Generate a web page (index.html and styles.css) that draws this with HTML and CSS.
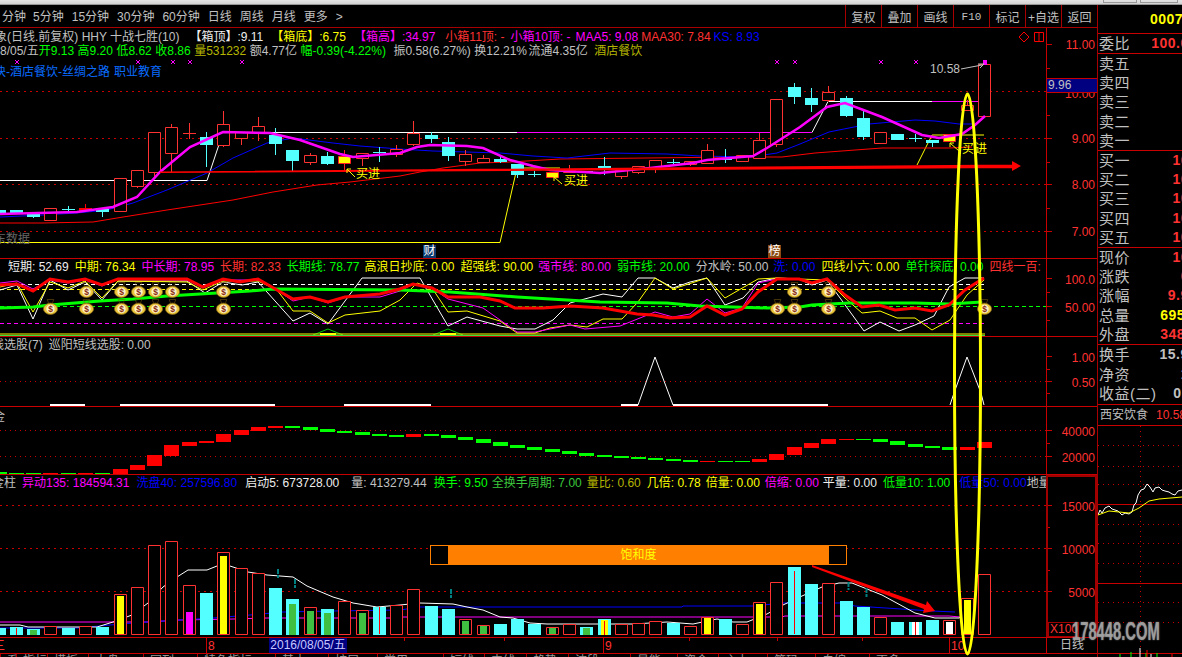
FILE: index.html
```html
<!DOCTYPE html>
<html lang="zh">
<head>
<meta charset="utf-8">
<title>K线</title>
<link rel="stylesheet" href="styles.css">
</head>
<body>
<div class="titlebar"><i class="win-btn"></i><i class="win-btn wide"></i></div>
<div class="app">
  <main class="main">
    <nav class="toolbar">
      <div class="periods">
        <span class="cutoff">分钟</span><span>5分钟</span><span>15分钟</span><span>30分钟</span><span>60分钟</span><span>日线</span><span>周线</span><span>月线</span><span>更多</span><span>&gt;</span>
      </div>
      <div class="tools">
        <span>复权</span><span>叠加</span><span>画线</span><span class="f10">F10</span><span>标记</span><span>+自选</span><span>返回</span>
      </div>
    </nav>

    <section class="pane pane-k">
      <div class="plot">
        <svg class="chart" viewBox="0 28 1046 230">
          <path class="dot" d="M0 91.5H1046M0 138.5H1046M0 184.5H1046M0 231.5H1046"/>
          <path class="thin-yellow" d="M0 242.5H500L517 168H560M917 165L932 135H984"/>
          <path class="thin-white" d="M0 180.5H207L223 132.5H517M812 132.5L828 101.5H932"/>
          <path class="thin-magenta" d="M517 132.5H812M932 101.5H984"/>
          <path class="thin-red" d="M0 223H42L93 222L117 218L167 210L233 200L273 192L317 185L350 182L400 176L420 172L443 168L480 163L510 162L560 159L733 157L782 157L815 153L882 148L949 148L972 147"/>
          <path class="thin-blue" d="M0 217L43 215L77 213L107 210L133 203L167 190L207 173L233 158L267 143L293 138L333 143L360 146L400 149L433 151L500 153L533 156L567 158L610 153L667 154L700 156L750 157L777 153L800 144L829 132L869 124L915 120L935 121L959 124L972 124"/>
          <path class="cand-red" d="M44.5 208.5h12v12h-12zM114.5 178.5h12v33h-12zM131.5 170.5h12v16h-12zM137.5 186V188M148.5 132.5h12v40h-12zM154.5 172V179M165.5 127.5h12v26h-12zM171.5 124V127M171.5 153V173M183 133.5h13M189.5 123V139M217.5 124.5h12v21h-12zM223.5 111V124M223.5 145V147M235.5 132.5h12v6h-12zM241.5 138V145M252.5 126.5h12v6h-12zM258.5 117V126M258.5 132V141M304.5 155.5h12v7h-12zM310.5 153V155M310.5 162V165M356.5 153.5h12v5h-12zM362.5 158V166M390.5 149.5h12v5h-12zM396.5 145V149M396.5 154V157M407.5 133.5h12v11h-12zM413.5 121V133M413.5 144V146M459.5 154.5h12v7h-12zM465.5 150V154M465.5 161V166M477.5 158.5h12v4h-12zM483.5 155V158M483.5 162V163M563.5 170.5h12v2h-12zM569.5 165V170M615.5 170.5h12v6h-12zM621.5 176V179M632.5 166.5h12v6h-12zM638.5 172V174M649.5 160.5h12v8h-12zM655.5 168V173M684.5 161.5h12v3h-12zM690.5 164V166M701.5 150.5h12v13h-12zM707.5 144V150M736.5 155.5h12v6h-12zM753.5 140.5h12v18h-12zM759.5 133V140M770.5 99.5h12v45h-12zM776.5 144V147M822.5 92.5h12v8h-12zM828.5 86V92M828.5 100V102M874.5 132.5h12v11h-12zM961.5 105.5h12v5h-12zM967.5 100V105M978.5 64.5h12v52h-12z"/>
          <path class="fill-red" d="M79 208h13v3h-13zM85 204h1v8h-1z"/>
          <path class="cand-yellow" d="M338.5 156.5h12v7h-12zM344.5 150V156M344.5 163V170M546.5 172.5h12v5h-12zM943.5 134.5h12v7h-12z"/>
          <path class="fill-cyan" d="M0 210h6v3h-6zM10 210h13v3.5h-13zM27 214h13v3h-13zM96 209h13v3h-13zM200 137h13v8h-13zM269 135h13v9h-13zM286 150h13v11h-13zM321 156h13v8h-13zM425 135h13v4h-13zM442 142h13v14h-13zM494 159h13v3h-13zM511 164h13v11h-13zM580 171h13v2h-13zM598 166h13v4h-13zM788 87h13v10h-13zM805 98h13v7h-13zM840 98h13v18h-13zM857 118h13v19h-13zM891 134h13v6h-13zM926 140h13v3h-13z"/>
          <path class="wick-cyan" d="M33.5 212V218M62 209.5H75M68.5 206V212M102.5 212V217M206.5 132V167M275.5 128V155M292.5 161V172M327.5 152V165M373 152.5H386M379.5 147V162M431.5 132V143M448.5 137V161M500.5 156V163M517.5 175V178M528 174.5H541M534.5 171V177M604.5 157V175M667 162.5H680M673.5 159V165M719 159.5H732M725.5 149V163M794.5 83V104M811.5 88V112M846.5 96V117M863.5 111V140M909 138.5H922M915.5 134V142M932.5 143V147"/>
          <path class="thick-magenta" d="M0 214L77 212L113 207L137 197L160 172L190 147L223 132L270 133L300 140L340 154L353 157L400 153L417 147L430 145L467 146L483 148L510 160L533 166L550 170L600 173L650 168L693 163L707 160L753 156L767 148L800 127L827 107L845 103L882 117L922 135L939 138L962 134L975 125L985 116"/>
          <path class="arrow-red" d="M160 171.5L1012 164.5V168L160 173zM1012 161L1021 166L1012 171z"/>
          <path class="marks" d="M15 60l4 4m0-4l-4 4M136 60l4 4m0-4l-4 4M171 60l4 4m0-4l-4 4M188 60l4 4m0-4l-4 4M240 60l4 4m0-4l-4 4M775 60l4 4m0-4l-4 4M793 60l4 4m0-4l-4 4M879 60l4 4m0-4l-4 4M914 60l4 4m0-4l-4 4"/>
          <rect class="mark-fill" x="983" y="60" width="4" height="5"/>
          <path class="label-line" d="M961 69L982 65M978 64L984 64L980 68"/>
          <path class="buy-arrow" d="M347 169l8 8M347 169h4M347 169v4M554 177l8 7M554 177h4M554 177v4M950 143l9 8M950 143h4M950 143v4"/>
          <text class="buy" x="356" y="178">买进</text>
          <text class="buy" x="564" y="185">买进</text>
          <text class="buy wide" x="962" y="153">买进</text>
          <text class="price-note" x="930" y="73">10.58</text>
          <path class="sig-red" d="M1024 32l5 5-5 5-5-5zM1034.5 32.500h9v9h-9zM1039 32.500v9"/>
        </svg>
        <div class="heads">
          <div class="head-row">
            <span class="g shift">象(日线.前复权) HHY 十战七胜(10)</span>
            <span class="w s1">【箱顶】:9.11</span>
            <span class="y s2">【箱底】:6.75</span>
            <span class="m s2">【箱高】:34.97</span>
            <span class="r s3b">小箱11顶: -</span>
            <span class="m s4">小箱10顶: -</span>
            <span class="m s5">MAA5: 9.08</span>
            <span class="r s3">MAA30: 7.84</span>
            <span class="b s3">KS: 8.93</span>
          </div>
          <div class="head-row tight">
            <span class="g">8/05/五</span>
            <span class="gr">开9.13</span>
            <span class="gr s7">高9.20</span>
            <span class="gr s7">低8.62</span>
            <span class="gr s7">收8.86</span>
            <span class="ol s7">量531232</span>
            <span class="g s7">额4.77亿</span>
            <span class="gr s7">幅-0.39(-4.22%)</span>
            <span class="g s10">振0.58(6.27%)</span>
            <span class="g s7">换12.21%</span>
            <span class="g s11">流通4.35亿</span>
            <span class="ol s12">酒店餐饮</span>
          </div>
          <div class="head-row concept">
            <span class="sky shift-c">块-酒店餐饮-丝绸之路</span>
            <span class="sky s6">职业教育</span>
          </div>
        </div>
        <span class="ghost">东数据</span>
        <span class="chip chip-blue">财</span>
        <span class="chip chip-brown">榜</span>
      </div>
      <div class="axis">
        <svg class="chart" viewBox="1047 28 50 230">
          <path class="tick" d="M1047 44.500h5M1047 68.500h3M1047 115.500h3M1047 138.500h5M1047 162.500h3M1047 184.500h5M1047 208.500h3M1047 231.500h5"/>
          <text class="axis-text" x="1095" y="48">11.00</text>
          <text class="axis-text" x="1095" y="97">10.00</text>
          <text class="axis-text" x="1095" y="142">9.00</text>
          <text class="axis-text" x="1095" y="188">8.00</text>
          <text class="axis-text" x="1095" y="235">7.00</text>
        </svg>
        <div class="cursor-price">9.96</div>
      </div>
    </section>

    <section class="pane pane-osc">
      <div class="plot">
        <svg class="chart" viewBox="0 259 1046 77">
          <defs>
            <symbol id="bag" viewBox="0 0 16 16">
              <path class="bag-neck" d="M4.500 0h7l-1.500 4h-4z"/>
              <ellipse class="bag-body" cx="8" cy="10" rx="7.500" ry="6"/>
              <ellipse class="bag-core" cx="8" cy="10" rx="4.500" ry="4.500"/>
              <text class="bag-sign" x="8" y="13.500">$</text>
            </symbol>
          </defs>
          <path class="dash-w" d="M0 284.500H985"/>
          <path class="dash-y" d="M0 289.500H985"/>
          <path class="dash-g" d="M0 306.500H1046"/>
          <path class="dash-m" d="M0 323.500H985"/>
          <path class="base-g" d="M313 335L328 329L343 335M433 335L448 329L463 335"/>
          <path class="base-y" d="M320 334H336M440 334H456"/>
          <path class="line-base-y" d="M0 334H985"/>
          <path class="line-base-g" d="M0 335.500H985"/>
          <path class="thin-white" d="M0 290L17 285L33 319L50 280L68 290L85 282L102 300L118 281L187 281L205 293L223 282L242 285L258 282L293 321L310 313L328 324L362 278L420 278L448 326L467 317L500 326L517 329L535 329L553 320L570 303L603 294L622 297L638 278L655 278L673 288L690 282L707 278L725 305L743 298L758 282L777 278L799 279L812 285L827 280L864 331L880 322L899 331L915 325L934 316L949 287L965 278L984 278"/>
          <path class="thin-yellow" d="M0 287L17 283L33 312L50 282L68 288L85 281L102 298L118 281L187 282L203 290L223 281L258 281L277 290L293 311L310 311L328 323L345 315L380 311L400 300L417 283L432 288L448 312L467 311L500 321L517 333L535 333L550 328L570 325L587 327L603 319L622 319L638 302L655 278L673 289L707 278L725 298L758 279L777 278L799 279L827 280L845 298L862 313L880 311L897 318L915 318L932 330L950 320L967 295L984 280"/>
          <path class="thin-magenta" d="M0 283L17 281L33 289L50 280L68 283L85 280L102 286L118 279L187 280L203 288L223 280L258 280L277 290L293 301L310 297L328 303L345 297L380 297L400 291L413 284L432 288L448 299L483 308L517 332L535 332L570 325L585 329L620 326L655 312L673 317L690 314L707 299L725 313L742 308L758 283L777 279"/>
          <path class="thick-green" d="M0 308L33 307L50 305L100 301L133 299L167 296L217 293L250 291L273 289L400 290L450 292L517 297L567 300L600 302L667 303L700 306L733 307L767 308L800 307L812 305L849 303L915 303L949 304L982 302"/>
          <path class="thick-red" d="M0 285L17 284L33 291L50 279L68 282L85 279L102 285L118 279L187 279L203 287L223 279L240 282L258 279L277 290L293 299L310 297L328 302L345 297L380 294L400 289L413 284L432 288L448 297L480 297L500 301L515 308L543 308L570 306L603 308L637 314L653 315L670 318L690 317L707 306L725 315L742 309L758 292L777 279L799 279L812 283L827 279L845 295L862 307L879 305L895 310L915 308L932 311L949 305L965 290L984 278"/>
          <use href="#bag" x="43" y="299" width="15" height="16"/>
          <use href="#bag" x="79" y="282" width="15" height="16"/>
          <use href="#bag" x="79" y="299" width="15" height="16"/>
          <use href="#bag" x="114" y="282" width="15" height="16"/>
          <use href="#bag" x="114" y="299" width="15" height="16"/>
          <use href="#bag" x="131" y="282" width="15" height="16"/>
          <use href="#bag" x="131" y="299" width="15" height="16"/>
          <use href="#bag" x="148" y="282" width="15" height="16"/>
          <use href="#bag" x="148" y="299" width="15" height="16"/>
          <use href="#bag" x="165" y="282" width="15" height="16"/>
          <use href="#bag" x="165" y="299" width="15" height="16"/>
          <use href="#bag" x="216" y="282" width="15" height="16"/>
          <use href="#bag" x="216" y="299" width="15" height="16"/>
          <use href="#bag" x="770" y="299" width="15" height="16"/>
          <use href="#bag" x="787" y="282" width="15" height="16"/>
          <use href="#bag" x="787" y="299" width="15" height="16"/>
          <use href="#bag" x="821" y="282" width="15" height="16"/>
          <use href="#bag" x="821" y="299" width="15" height="16"/>
          <use href="#bag" x="977" y="299" width="15" height="16"/>
        </svg>
        <div class="heads">
          <div class="head-row">
            <span class="w s8">短期: 52.69</span>
            <span class="y s9">中期: 76.34</span>
            <span class="m s9">中长期: 78.95</span>
            <span class="r s9">长期: 82.33</span>
            <span class="gr s9">长期线: 78.77</span>
            <span class="y s9b">高浪日抄底: 0.00</span>
            <span class="y s9">超强线: 90.00</span>
            <span class="m s9b">强市线: 80.00</span>
            <span class="gr s9">弱市线: 20.00</span>
            <span class="g s9">分水岭: 50.00</span>
            <span class="b s9b">洗: 0.00</span>
            <span class="y s9">四线小六: 0.00</span>
            <span class="gr s9">单针探底: 0.00</span>
            <span class="r s9">四线一百:</span>
          </div>
        </div>
      </div>
      <div class="axis">
        <svg class="chart" viewBox="1047 259 50 77">
          <path class="tick" d="M1047 278.500h5M1047 292.500h3M1047 306.500h5M1047 320.500h3"/>
          <text class="axis-text" x="1095" y="283">100.0</text>
          <text class="axis-text" x="1095" y="311">50.00</text>
        </svg>
      </div>
    </section>

    <section class="pane pane-select">
      <div class="plot">
        <svg class="chart" viewBox="0 337 1046 69">
          <path class="dot-fine" d="M0 381.500H1046"/>
          <path class="base-white" d="M50 405H85M120 405H275M344 405H431M621 405H638M673 405H828"/>
          <path class="line-white" d="M638 405L655 357L673 405M950 405L954 393L967 357L981 393L984 405"/>
        </svg>
        <div class="heads">
          <div class="head-row">
            <span class="g shift-l">线选股(7)</span>
            <span class="g s9">巡阳短线选股: 0.00</span>
          </div>
        </div>
      </div>
      <div class="axis">
        <svg class="chart" viewBox="1047 337 50 69">
          <path class="tick" d="M1047 356.500h5M1047 369.500h3M1047 381.500h5M1047 393.500h3"/>
          <text class="axis-text" x="1095" y="361">1.00</text>
          <text class="axis-text" x="1095" y="386">0.50</text>
        </svg>
      </div>
    </section>

    <section class="pane pane-fund">
      <div class="plot">
        <svg class="chart" viewBox="0 407 1046 67">
          <path class="dot-fine" d="M0 430.500H1046M0 456.500H1046"/>
          <path class="fill-green" d="M0 472h7v2h-7zM9 473h15v1h-15zM26 473h15v1h-15zM61 473h15v1h-15zM95 473h15v1h-15zM285 426h15v2h-15zM303 427h15v3h-15zM320 429h15v3h-15zM337 431h15v2h-15zM355 432h15v3h-15zM372 434h15v2h-15zM389 435h15v2h-15zM424 434h15v2h-15zM441 435h15v3h-15zM458 437h15v3h-15zM476 439h15v4h-15zM493 442h15v4h-15zM510 445h15v3h-15zM527 447h15v3h-15zM545 449h15v3h-15zM562 451h15v3h-15zM579 453h15v3h-15zM597 455h15v2h-15zM614 456h15v2h-15zM631 457h15v2h-15zM648 458h15v2h-15zM666 459h15v2h-15zM683 460h15v2h-15zM718 461h15v1h-15zM735 461h15v1h-15zM856 439h15v1h-15zM873 439h15v3h-15zM890 441h15v4h-15zM908 444h15v3h-15zM925 446h15v2h-15zM942 447h15v3h-15z"/>
          <path class="fill-pure-red" d="M43 473h15v1h-15zM78 473h15v1h-15zM113 469h15v5h-15zM130 465h15v5h-15zM147 455h15v11h-15zM164 445h15v11h-15zM182 442h15v4h-15zM199 441h15v2h-15zM216 434h15v8h-15zM234 430h15v5h-15zM251 427h15v4h-15zM268 426h15v2h-15zM406 434h15v3h-15zM700 461h15v1h-15zM752 459h15v3h-15zM769 454h15v6h-15zM787 447h15v8h-15zM804 443h15v5h-15zM821 439h15v5h-15zM839 439h15v1h-15zM960 447h15v3h-15zM977 442h15v6h-15z"/>
        </svg>
        <div class="heads">
          <div class="head-row">
            <span class="g shift-xs">金</span>
          </div>
        </div>
      </div>
      <div class="axis">
        <svg class="chart" viewBox="1047 407 50 67">
          <path class="tick" d="M1047 430.500h5M1047 443.500h3M1047 456.500h5"/>
          <text class="axis-text" x="1095" y="435">40000</text>
          <text class="axis-text" x="1095" y="461">20000</text>
        </svg>
      </div>
    </section>

    <section class="pane pane-vol">
      <div class="plot">
        <svg class="chart" viewBox="0 475 1046 162">
          <path class="dot" d="M0 505.500H1046M0 548.500H1046M0 591.500H1046"/>
          <path class="thin-magenta" d="M0 622H107L147 622L180 620L233 619L267 618H400L402 617H782L785 616H949L960 617"/>
          <path class="thin-blue" d="M0 628L77 628L110 625L147 622L180 620L213 618L250 615L283 612L333 611L400 610L420 607H682L683 606H753L783 603H842L855 606L932 611L955 612"/>
          <path class="thin-white" d="M0 625H20L28 627H97L113 622L132 615L148 603L163 587L177 577L188 570H207L217 566H230L248 572L267 575L293 577L307 586L333 597L353 603L377 607L400 605L420 603L453 604L467 607L483 610L500 617L513 618L530 623L547 624H633L667 622L693 624L717 619L733 622H747L767 614L783 605L802 596L822 587L839 583H852L882 595L915 613L935 618L959 618L975 610"/>
          <path class="fill-cyan" d="M0 628h6v7h-6zM10 627h13v8h-13zM27 629h13v6h-13zM62 628h13v7h-13zM96 627h13v8h-13zM200 593h13v42h-13zM269 588h13v47h-13zM286 599h13v36h-13zM321 609h13v26h-13zM373 607h13v28h-13zM425 606h13v29h-13zM442 609h13v26h-13zM494 624h13v11h-13zM511 619h13v16h-13zM528 624h13v11h-13zM580 627h13v8h-13zM598 619h13v16h-13zM667 623h13v12h-13zM719 619h13v16h-13zM788 567h13v68h-13zM805 584h13v51h-13zM840 601h13v34h-13zM857 607h13v28h-13zM891 622h13v13h-13zM909 622h13v13h-13zM926 620h13v15h-13z"/>
          <path class="bar-red" d="M44.500 626.500h12v8h-12zM79.500 626.500h12v8h-12zM114.500 594.500h12v40h-12zM131.500 587.500h12v47h-12zM148.500 545.500h12v89h-12zM165.500 541.500h12v93h-12zM183.500 585.500h12v49h-12zM217.500 552.500h12v82h-12zM235.500 568.500h12v66h-12zM252.500 573.500h12v61h-12zM304.500 607.500h12v27h-12zM338.500 601.500h12v33h-12zM356.500 610.500h12v24h-12zM390.500 605.500h12v29h-12zM407.500 589.500h12v45h-12zM459.500 619.500h12v15h-12zM477.500 625.500h12v9h-12zM546.500 627.500h12v7h-12zM563.500 624.500h12v10h-12zM615.500 624.500h12v10h-12zM632.500 623.500h12v11h-12zM649.500 621.500h12v13h-12zM684.500 626.500h12v8h-12zM701.500 617.500h12v17h-12zM736.500 624.500h12v10h-12zM753.500 602.500h12v32h-12zM770.500 582.500h12v52h-12zM822.500 583.500h12v51h-12zM874.500 617.500h12v17h-12zM943.500 620.500h12v14h-12zM961.500 598.500h12v36h-12zM978.500 574.500h12v60h-12z"/>
          <path class="fill-green-soft" d="M30 630h7v5h-7zM289 604h7v31h-7zM307 611h7v23h-7zM324 613h7v22h-7zM359 613h7v21h-7zM462 621h7v13h-7zM480 626h7v8h-7zM549 628h7v6h-7zM583 628h7v7h-7z"/>
          <path class="fill-yellow" d="M117 596h7v38h-7zM220 556h7v78h-7zM601 620h7v15h-7zM704 618h7v16h-7zM756 604h7v30h-7zM964 600h7v34h-7z"/>
          <rect class="fill-magenta" x="186" y="612" width="7" height="22"/>
          <path class="fill-white" d="M912 622h7v13h-7zM946 622h7v12h-7z"/>
          <path class="stroke-red" d="M16.500 628V635M379.500 607V634M604.500 621V635M794.500 571V634M915.500 622V635"/>
          <path class="stroke-teal" d="M278 569v9M295 579v9M451 589v9M848.500 582v8M866.500 588v9"/>
          <path class="arrow-red" d="M812 565L926 605L927 601L935 611L923 613L924 609L812 567z"/>
        </svg>
        <div class="heads">
          <div class="head-row gap6">
            <span class="g shift-v">金柱</span>
            <span class="m">异动135: 184594.31</span>
            <span class="b e1">洗盘40: 257596.80</span>
            <span class="w e2">启动5: 673728.00</span>
            <span class="g e6">量: 413279.44</span>
            <span class="gr e1">换手: 9.50</span>
            <span class="dg n2">全换手周期: 7.00</span>
            <span class="ol n1">量比: 0.60</span>
            <span class="y">几倍: 0.78</span>
            <span class="y n1">倍量: 0.00</span>
            <span class="m n1">倍缩: 0.00</span>
            <span class="w n2">平量: 0.00</span>
            <span class="gr">低量10: 1.00</span>
            <span class="b e3">低量50: 0.00</span>
            <span class="g n6">地量</span>
          </div>
        </div>
        <div class="saturation">
          <span class="sat-gap"></span>
          <span class="sat-fill">饱和度</span>
          <span class="sat-gap sat-gap-end"></span>
        </div>
      </div>
      <div class="axis axis-active">
        <svg class="chart" viewBox="1048 477 47 160">
          <path class="tick" d="M1048 505.500h4M1048 527.500h2M1048 548.500h4M1048 570.500h2M1048 591.500h4"/>
          <text class="axis-text" x="1095" y="510">15000</text>
          <text class="axis-text" x="1095" y="553">10000</text>
          <text class="axis-text" x="1095" y="596">5000</text>
        </svg>
        <div class="scale-box">X100</div>
      </div>
    </section>

    <section class="pane pane-dates">
      <div class="plot">
        <svg class="chart" viewBox="0 638 1046 15">
          <path class="tick" d="M206.500 638V653M603.500 638V653M949.500 638V653M404.500 638V641M504.500 638V641M689.500 638V641M777.500 638V641M862.500 638V641"/>
          <text class="date-num" x="208" y="650">8</text>
          <text class="date-num" x="605" y="650">9</text>
          <text class="date-num" x="951" y="650">10</text>
          <text class="date-num" x="-7" y="650">三</text>
        </svg>
        <span class="cursor-date">2016/08/05/五</span>
      </div>
      <div class="axis axis-label">日线</div>
    </section>

    <div class="tabs">
      <span>系统</span><span>指标</span><span>模板</span><span>大盘</span><span>同列</span><span>特色指标</span><span>基本</span><span>扩展</span><span>常用</span><span>短线</span><span>中线</span><span>趋势</span><span>波段</span><span>量能</span><span>资金</span><span>主力</span><span>筹码</span><span>自编</span><span>更多</span>
    </div>
  </main>

  <aside class="side">
    <div class="code"><span>0007</span></div>
    <div class="side-group ratio">
      <div class="quote"><span>委比</span><b class="r">100.00%</b></div>
    </div>
    <div class="side-group book">
      <div class="quote"><span>卖五</span></div>
      <div class="quote"><span>卖四</span></div>
      <div class="quote"><span>卖三</span></div>
      <div class="quote"><span>卖二</span></div>
      <div class="quote"><span>卖一</span></div>
    </div>
    <div class="side-group book">
      <div class="quote"><span>买一</span><b class="r">10.58</b></div>
      <div class="quote"><span>买二</span><b class="r">10.57</b></div>
      <div class="quote"><span>买三</span><b class="r">10.56</b></div>
      <div class="quote"><span>买四</span><b class="r">10.55</b></div>
      <div class="quote"><span>买五</span><b class="r">10.54</b></div>
    </div>
    <div class="side-group book">
      <div class="quote"><span>现价</span><b class="r">10.58</b></div>
      <div class="quote"><span>涨跌</span><b class="r">0.96</b></div>
      <div class="quote"><span>涨幅</span><b class="r">9.98%</b></div>
      <div class="quote"><span>总量</span><b class="y">695382</b></div>
      <div class="quote"><span>外盘</span><b class="r">348120</b></div>
    </div>
    <div class="side-group stats">
      <div class="quote"><span>换手</span><b class="g">15.99%</b></div>
      <div class="quote"><span>净资</span><b class="g">1.12</b></div>
      <div class="quote"><span>收益(二)</span><b class="g">0.119</b></div>
    </div>
    <div class="side-group peer">
      <span class="peer-name">西安饮食</span><span class="peer-price">10.58</span>
    </div>
    <svg class="mini" viewBox="1098 426 84 231">
      <path class="dot-fine" d="M1098 445.500H1182M1098 466.500H1182M1098 484.500H1182M1098 524.500H1182M1098 543.500H1182M1098 563.500H1182M1098 602.500H1182M1098 622.500H1182M1140.500 426V653"/>
      <path class="tick" d="M1098 504.500H1182M1098 583.500H1182M1098 653.500H1182"/>
      <path class="mini-white" d="M1098 515L1100 510L1102 513L1105 508L1109 506L1112 509L1115 510L1118 511L1122 515L1125 513L1129 514L1132 512L1134 505L1136 503L1138 495L1141 490L1144 489L1147 484L1150 487L1153 492L1155 488L1159 487L1162 490L1165 491L1169 492L1172 494L1175 495L1178 491L1182 490"/>
      <path class="mini-yellow" d="M1098 515L1109 511L1129 513L1139 508L1149 501L1159 499L1182 497"/>
      <path class="mini-vol" d="M1120 654v3M1131 652v5M1146 653v4M1157 653v4"/>
      <path class="mini-vol-w" d="M1140 648v9M1151 654v3"/>
      <path class="mini-vol-r" d="M1147 650v7M1172 654v3"/>
    </svg>
  </aside>
</div>

<svg class="overlay" viewBox="0 0 1182 657">
  <ellipse class="ring" cx="967.500" cy="374" rx="13" ry="280"/>
</svg>
<div class="watermark">178448.COM</div>
</body>
</html>
```

FILE: styles.css
```css
* { box-sizing: border-box; }
html, body { margin: 0; padding: 0; }
body {
  position: relative;
  width: 1182px;
  height: 657px;
  overflow: hidden;
  background: #000;
  color: #c0c0c0;
  font-family: "Liberation Sans", "Noto Sans CJK SC", sans-serif;
  font-size: 12px;
}
.titlebar { height: 5px; display: flex; justify-content: flex-end; gap: 3px; padding-right: 4px; background: linear-gradient(#e4e4e4 0, #d4d4d4 70%, #777 100%); }
.win-btn { width: 34px; height: 3px; border: 1px solid #999; border-top: 0; }
.win-btn.wide { width: 38px; }
.app { display: flex; height: 652px; }
.main { width: 1097px; display: flex; flex-direction: column; flex: none; }

/* toolbar */
.toolbar { height: 23px; flex: none; display: flex; justify-content: space-between; border-bottom: 1px solid #a80000; }
.periods { display: flex; align-items: center; gap: 8px; padding-left: 2px; padding-top: 1px; font-size: 12px; line-height: 14px; }
.cutoff { margin-right: -1px; }
.tools { display: flex; }
.tools span { width: 36px; display: flex; align-items: center; justify-content: center; padding-top: 1px; border-left: 1px solid #a80000; }
.f10 { font-family: "Liberation Mono", monospace; font-size: 11px; }

/* panes */
.pane { display: flex; flex: none; border-bottom: 1px solid #c80000; }
.pane-k { height: 231px; }
.pane-osc { height: 78px; }
.pane-select { height: 70px; }
.pane-fund { height: 68px; }
.pane-vol { height: 163px; }
.pane-dates { height: 16px; }
.plot { position: relative; width: 1046px; flex: none; overflow: hidden; }
.axis { position: relative; flex: 1; border-left: 1px solid #c80000; overflow: hidden; }
.chart { position: absolute; left: 0; top: 0; width: 100%; height: 100%; display: block; }
.heads { position: relative; white-space: nowrap; }
.head-row { display: flex; height: 14px; line-height: 14px; font-size: 12px; padding-top: 0; }
.pane-k .heads { padding-top: 2px; }
.pane-osc .heads { padding-top: 1px; }
.pane-select .heads { padding-top: 1px; }
.pane-fund .heads { padding-top: 3px; }
.pane-vol .heads { padding-top: 1px; }
.concept { margin-top: 7px; }
.gap6 { gap: 6px; }
.shift { margin-left: -5px; }
.shift-c { margin-left: -6px; }
.shift-l { margin-left: -8px; }
.shift-xs { margin-left: -7px; }
.shift-v { margin-left: -8px; }
.s1 { margin-left: 10px; }
.s2 { margin-left: 8px; }
.s3 { margin-left: 3px; }
.s3b { margin-left: 10px; }
.s4 { margin-left: 6px; }
.s5 { margin-left: 5px; }
.s6 { margin-left: 4px; }
.s7 { margin-left: 3.5px; }
.s8 { margin-left: 8px; }
.s9 { margin-left: 6px; }
.s9b { margin-left: 5px; }
.s10 { margin-left: 7.5px; }
.s11 { margin-left: 1.5px; }
.s12 { margin-left: 6.5px; }
.e1 { margin-left: 1px; }
.e2 { margin-left: 2px; }
.e3 { margin-left: 3px; }
.e6 { margin-left: 6px; }
.n1 { margin-left: -1px; }
.n2 { margin-left: -2px; }
.n6 { margin-left: -6px; }

.w { color: #eee; }
.g { color: #c0c0c0; }
.y { color: #ff0; }
.m { color: #f0f; }
.r { color: #ff3232; }
.gr { color: #0f0; }
.b { color: #0000ff; }
.sky { color: #0a6cff; }
.ol { color: #b4b400; }
.dg { color: #3cc83c; }

.ghost { position: absolute; left: -6px; top: 204px; color: #666; line-height: 14px; }
.chip { position: absolute; top: 217px; width: 13px; height: 13px; line-height: 13px; text-align: center; color: #fff; }
.chip-blue { left: 423px; background: #0a3a6e; }
.chip-brown { left: 768px; background: #8a4a12; }

/* svg strokes */
.chart path, .mini path, .overlay ellipse { fill: none; }
.chart .fill-red, .chart .arrow-red, .chart .fill-pure-red { fill: #f00; }
.chart .cand-red, .chart .bar-red { fill: #000; stroke: #ff3232; stroke-width: 1; }
.chart .cand-yellow { fill: #ff0; stroke: #ff2020; stroke-width: 1; }
.chart .fill-cyan { fill: #54ffff; }
.chart .fill-green { fill: #0f0; }
.chart .fill-green-soft { fill: #40c040; }
.chart .fill-yellow { fill: #ff0; }
.chart .fill-white { fill: #fff; }
.fill-magenta { fill: #f0f; }
.wick-cyan { stroke: #54ffff; stroke-width: 1; }
.dot { stroke: #c80000; stroke-width: 1; stroke-dasharray: 2 4; }
.dot-fine { stroke: #c80000; stroke-width: 1; stroke-dasharray: 1 4; }
.thin-yellow { stroke: #ff0; stroke-width: 1; }
.thin-white { stroke: #fff; stroke-width: 1; }
.thin-magenta { stroke: #f0f; stroke-width: 1; }
.thin-red { stroke: #f00; stroke-width: 1; }
.thin-blue { stroke: #0000ff; stroke-width: 1; }
.line-white { stroke: #fff; stroke-width: 1; }
.base-white { stroke: #fff; stroke-width: 2; }
.thick-magenta { stroke: #f0f; stroke-width: 2.5; }
.thick-red { stroke: #f00; stroke-width: 3; }
.thick-green { stroke: #0f0; stroke-width: 3; }
.marks { stroke: #f0f; stroke-width: 1; }
.mark-fill { fill: #f0f; }
.label-line { stroke: #c0c0c0; stroke-width: 1; }
.buy-arrow { stroke: #ff0; stroke-width: 1; }
.buy { font: 12px "Noto Sans CJK SC", sans-serif; fill: #ff0; }
.buy.wide { letter-spacing: 1px; }
.price-note { font: 12px "Liberation Sans", sans-serif; fill: #c0c0c0; }
.sig-red { stroke: #f00; stroke-width: 1; }
.dash-w { stroke: #fff; stroke-dasharray: 4 3; }
.dash-y { stroke: #ff0; stroke-dasharray: 4 3; }
.dash-g { stroke: #0f0; stroke-dasharray: 4 3; }
.dash-m { stroke: #f0f; stroke-dasharray: 4 3; }
.base-g { stroke: #0c0; stroke-width: 1; }
.base-y { stroke: #ff0; stroke-width: 2; }
.line-base-y { stroke: #ff0; stroke-width: 1; }
.line-base-g { stroke: #3ce03c; stroke-width: 1; }
.bag-neck { fill: #e0b830; stroke: #7a5a10; stroke-width: .6; }
.bag-body { fill: #ecc63c; stroke: #8a6a14; stroke-width: .8; }
.bag-core { fill: #fbf2c8; }
.bag-sign { font: bold 9px "Liberation Sans", sans-serif; fill: #8a2a10; text-anchor: middle; }
.stroke-red { stroke: #f00; stroke-width: 1; }
.stroke-teal { stroke: #008080; stroke-width: 2; stroke-dasharray: 5 1 3; }
.tick { stroke: #c80000; stroke-width: 1; }
.axis-text { font: 12px "Liberation Sans", sans-serif; fill: #ff3232; text-anchor: end; transform: translateY(1px); }
.date-num { font: 12px "Liberation Sans", "Noto Sans CJK SC", sans-serif; fill: #ff3232; }

.cursor-price { position: absolute; left: 0; right: 0; top: 50px; height: 15px; line-height: 13px; padding-left: 1px; background: #000080; border-top: 1px solid #c80000; border-bottom: 1px solid #c80000; color: #c0c0c0; }
.axis-active { border: 2px solid #a00000; border-bottom: 0; }
.scale-box { position: absolute; left: 0; bottom: 0; width: 31px; height: 15px; line-height: 13px; border: 1px solid #a00000; color: #ff3232; padding-left: 1px; }

/* saturation bar */
.saturation { position: absolute; left: 430px; top: 70px; width: 417px; height: 20px; display: flex; border: 1px solid #ff8000; }
.sat-gap { width: 17px; flex: none; background: #000; }
.sat-fill { flex: 1; background: #ff7f00; color: #ff0; text-align: center; line-height: 18px; }

/* date row */
.cursor-date { position: absolute; left: 269px; top: 0; width: 78px; height: 15px; line-height: 15px; text-align: center; background: #000080; color: #c8c8ff; font-size: 12px; white-space: nowrap; }
.axis-label { text-align: center; line-height: 15px; color: #c0c0c0; }

/* bottom tabs */
.tabs { height: 3px; overflow: hidden; display: grid; grid-template-columns: 16px 31px 41px 55px 54px 78px 53px 49px 66px 41px 42px 42px 62px 47px 41px 49px 48px 54px 1fr; }
.tabs span { border-left: 1px solid #a80000; padding-left: 6px; padding-top: 1px; font-size: 12px; line-height: 12px; color: #999; white-space: nowrap; overflow: hidden; }

/* side panel */
.side { width: 85px; flex: none; position: relative; overflow: hidden; border-left: 1px solid #a80000; display: flex; flex-direction: column; }
.code { height: 29px; flex: none; padding-left: 52px; padding-top: 6px; color: #ff0; font: bold 14px/16px "Liberation Sans", sans-serif; letter-spacing: .5px; border-bottom: 1px solid #c80000; }
.side-group { flex: none; border-bottom: 1px solid #c80000; }
.ratio { height: 20px; }
.book { height: 97px; }
.stats { height: 60px; }
.stats .quote { height: 19.6px; }
.peer { height: 21px; line-height: 20px; padding-left: 2px; white-space: nowrap; display: flex; gap: 8px; }
.peer-name { font-size: 12px; }
.peer-price { color: #ff3232; font-size: 12px; }
.quote { position: relative; width: 112px; height: 19.2px; line-height: 19px; font-size: 15px; padding-left: 1px; letter-spacing: .5px; white-space: nowrap; display: flex; justify-content: space-between; }
.quote b { font: bold 14px/19px "Liberation Sans", sans-serif; letter-spacing: .5px; }
.mini { display: block; width: 84px; height: 231px; flex: none; }
.mini-white { stroke: #fff; stroke-width: 1; }
.mini-yellow { stroke: #ff0; stroke-width: 1; }
.mini-vol { stroke: #0f0; }
.mini-vol-w { stroke: #fff; }
.mini-vol-r { stroke: #f00; }

/* overlays */
.overlay { position: absolute; left: 0; top: 0; width: 1182px; height: 657px; pointer-events: none; }
.ring { stroke: #ff0; stroke-width: 3; }
.watermark { position: absolute; left: 1072px; top: 619px; font: bold 25px/25px "Liberation Sans", sans-serif; color: rgba(165,165,165,.85); text-shadow: 0 0 2px #888; white-space: nowrap; transform: scaleX(.59); transform-origin: left top; }
```
